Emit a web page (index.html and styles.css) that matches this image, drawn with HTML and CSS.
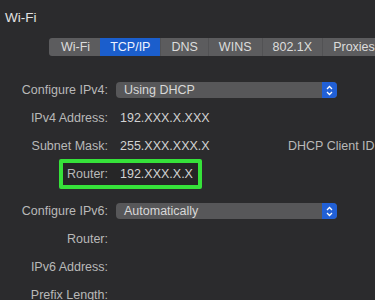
FILE: index.html
```html
<!DOCTYPE html>
<html lang="en">
<head>
    <meta charset="UTF-8">
    <meta name="viewport" content="width=device-width, initial-scale=1.0">
    <title>Wi-Fi</title>
    <link rel="stylesheet" href="styles.css">
</head>
<body>
    <div class="title">Wi-Fi</div>

    <div class="tabs">
        <span class="tab">Wi-Fi</span>
        <span class="tab active">TCP/IP</span>
        <span class="tab">DNS</span>
        <span class="tab">WINS</span>
        <span class="tab">802.1X</span>
        <span class="tab">Proxies</span>
    </div>

    <div class="form">
        <div class="row">
            <span class="label">Configure IPv4:</span>
            <div class="popup">
                <span>Using DHCP</span>
                <span class="stepper">
                    <svg width="7" height="11" viewBox="0 0 7 11"><path d="M1 4 L3.5 1.5 L6 4 M1 7 L3.5 9.5 L6 7" fill="none" stroke="#fff" stroke-width="1.3"/></svg>
                </span>
            </div>
        </div>
        <div class="row">
            <span class="label">IPv4 Address:</span>
            <span class="value">192.XXX.X.XXX</span>
        </div>
        <div class="row">
            <span class="label">Subnet Mask:</span>
            <span class="value">255.XXX.XXX.X</span>
            <span class="extra">DHCP Client ID</span>
        </div>
        <div class="row router">
            <span class="highlight"></span>
            <span class="label">Router:</span>
            <span class="value">192.XXX.X.X</span>
        </div>

        <div class="row ipv6">
            <span class="label">Configure IPv6:</span>
            <div class="popup">
                <span>Automatically</span>
                <span class="stepper">
                    <svg width="7" height="11" viewBox="0 0 7 11"><path d="M1 4 L3.5 1.5 L6 4 M1 7 L3.5 9.5 L6 7" fill="none" stroke="#fff" stroke-width="1.3"/></svg>
                </span>
            </div>
        </div>
        <div class="row">
            <span class="label">Router:</span>
        </div>
        <div class="row">
            <span class="label">IPv6 Address:</span>
        </div>
        <div class="row">
            <span class="label">Prefix Length:</span>
        </div>
    </div>
</body>
</html>
```

FILE: styles.css
```css
body {
    font-family: 'Liberation Sans', Arial, sans-serif;
    margin: 0;
    background: #2b2b2d;
    color: #d4d4d4;
    overflow: hidden;
    height: 300px;
}
.title {
    font-size: 13.5px;
    color: #e2e2e2;
    padding: 10px 0 0 5px;
    height: 38px;
    box-sizing: border-box;
}
.tabs {
    display: flex;
    margin-left: 49px;
    height: 18px;
    background: #5c5c5e;
    border-radius: 3px 0 0 3px;
    white-space: nowrap;
}
.tab {
    font-size: 12.5px;
    line-height: 18px;
    padding: 0 10px;
    color: #dcdcdc;
    border-left: 1px solid #525254;
}
.tab:first-child {
    border-left: none;
    padding-left: 12px;
}
.tab.active {
    background: #1b5ecc;
    color: #eef3ff;
    border-left: none;
}
.form {
    padding-top: 20px;
    font-size: 12.5px;
}
.row {
    display: flex;
    align-items: center;
    height: 28px;
    position: relative;
}
.label {
    width: 108px;
    text-align: right;
    color: #b9b9b9;
    flex-shrink: 0;
    position: relative;
}
.value {
    margin-left: 12px;
    color: #d2d2d2;
    width: 168px;
    position: relative;
}
.extra {
    color: #b9b9b9;
    white-space: nowrap;
}
.popup {
    margin-left: 8px;
    width: 221px;
    height: 16px;
    background: #575759;
    border-radius: 4px;
    display: flex;
    align-items: center;
    justify-content: space-between;
    padding-left: 8px;
    box-sizing: border-box;
    color: #d8d8d8;
}
.stepper {
    width: 15px;
    height: 16px;
    background: #2160d6;
    border-radius: 0 4px 4px 0;
    display: flex;
    align-items: center;
    justify-content: center;
}
.highlight {
    position: absolute;
    left: 59px;
    top: -1px;
    width: 143px;
    height: 30px;
    border: 4px solid #36e23a;
    border-radius: 2px;
    box-sizing: border-box;
    background: #262627;
}
.ipv6 {
    margin-top: 9px;
}
```
